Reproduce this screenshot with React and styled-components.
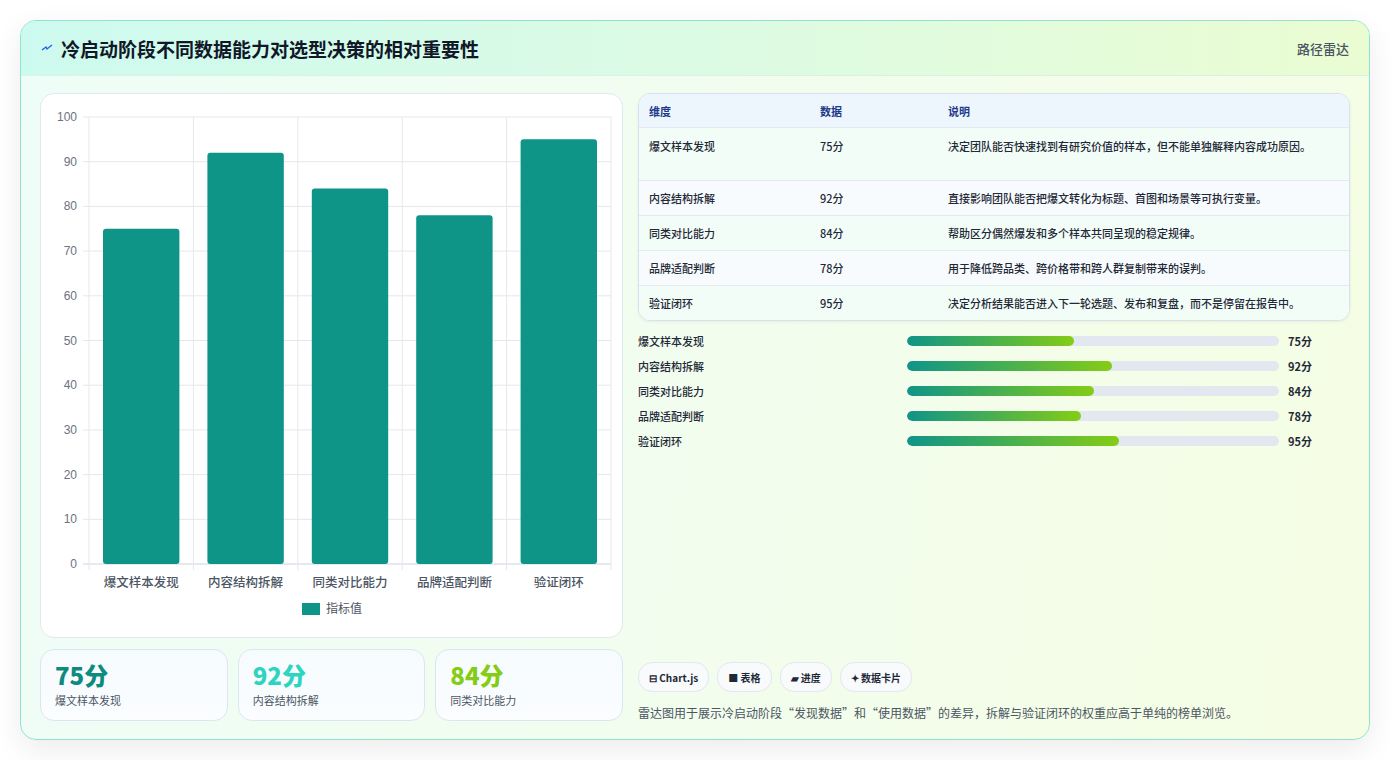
import React from 'react';
import styled, { createGlobalStyle } from 'styled-components';

const Global = createGlobalStyle`
  body { margin: 0; background: #ffffff; font-family: "Noto Sans CJK SC", "Noto Sans", sans-serif; }
`;

const data = [
  { name: '爆文样本发现', v: 75, note: '决定团队能否快速找到有研究价值的样本，但不能单独解释内容成功原因。' },
  { name: '内容结构拆解', v: 92, note: '直接影响团队能否把爆文转化为标题、首图和场景等可执行变量。' },
  { name: '同类对比能力', v: 84, note: '帮助区分偶然爆发和多个样本共同呈现的稳定规律。' },
  { name: '品牌适配判断', v: 78, note: '用于降低跨品类、跨价格带和跨人群复制带来的误判。' },
  { name: '验证闭环', v: 95, note: '决定分析结果能否进入下一轮选题、发布和复盘，而不是停留在报告中。' },
];

const Page = styled.div`
  padding: 20px;
  width: 1350px;
`;

const Shell = styled.div`
  height: 718px;
  border: 1px solid #8fe3cf;
  border-radius: 16px;
  overflow: hidden;
  background: linear-gradient(100deg, #effdf8 0%, #f2fdec 60%, #f5fde3 100%);
  box-shadow: 0 10px 30px rgba(0,0,0,0.08);
  display: flex;
  flex-direction: column;
`;

const Header = styled.div`
  height: 54px;
  flex: none;
  display: flex;
  align-items: center;
  justify-content: space-between;
  padding: 0 20px;
  background: linear-gradient(90deg, #cdfaef 0%, #dcfbe4 50%, #eafcd2 100%);
  border-bottom: 1px solid #d6f3e6;
`;

const Title = styled.h1`
  margin: 0;
  font-size: 19px;
  font-weight: 700;
  color: #111827;
  display: flex;
  align-items: center;
  gap: 8px;
`;

const Tag = styled.span`
  font-size: 13px;
  color: #4b5563;
  font-weight: 500;
`;

const Body = styled.div`
  flex: 1;
  display: grid;
  grid-template-columns: 583px 1fr;
  gap: 15px;
  padding: 17px 19px 19px 19px;
`;

const LeftCol = styled.div`
  display: flex;
  flex-direction: column;
  gap: 11px;
`;

const ChartCard = styled.div`
  height: 543px;
  background: #fff;
  border: 1px solid #e2e8f0;
  border-radius: 14px;
`;

const Stats = styled.div`
  display: grid;
  grid-template-columns: repeat(3, 1fr);
  gap: 10px;
`;

const Stat = styled.div`
  height: 72px;
  box-sizing: border-box;
  background: linear-gradient(180deg, #f6fbfe, #fbfdff);
  border: 1px solid #dbe7ef;
  border-radius: 14px;
  padding: 10px 14px;
`;

const StatValue = styled.div`
  font-size: 24px;
  font-weight: 800;
  line-height: 30px;
  color: ${p => p.c};
`;

const StatLabel = styled.div`
  font-size: 11px;
  color: #4b5563;
  margin-top: 2px;
`;

const RightCol = styled.div`
  display: flex;
  flex-direction: column;
`;

const Table = styled.div`
  border: 1px solid #d8e2ee;
  border-radius: 12px;
  overflow: hidden;
  box-shadow: 0 1px 3px rgba(0,0,0,0.06);
`;

const Row = styled.div`
  display: grid;
  grid-template-columns: 171px 128px 1fr;
  padding: 0 10px;
  min-height: ${p => p.h}px;
  align-items: ${p => (p.top ? 'start' : 'center')};
  padding-top: ${p => (p.top ? '9px' : '0')};
  box-sizing: border-box;
  font-size: 11px;
  color: ${p => (p.head ? '#1e3a8a' : '#1f2937')};
  font-weight: ${p => (p.head ? 700 : 500)};
  background: ${p => p.bg};
  border-top: ${p => (p.first ? 'none' : '1px solid #e3e9f0')};
  line-height: 18px;
`;

const Bars = styled.div`
  margin-top: 10px;
  display: flex;
  flex-direction: column;
  gap: 6px;
`;

const BarRow = styled.div`
  display: grid;
  grid-template-columns: 269px 372px 1fr;
  align-items: center;
  gap: 0;
  height: 19px;
  font-size: 11px;
  color: #1f2937;
  font-weight: 500;
`;

const Track = styled.div`
  height: 10px;
  border-radius: 5px;
  background: #e2e8f0;
  overflow: hidden;
`;

const Fill = styled.div`
  height: 100%;
  border-radius: 5px;
  background: linear-gradient(90deg, #0f9488, #84cc16);
`;

const BarValue = styled.span`
  padding-left: 9px;
  font-weight: 700;
`;

const Footer = styled.div`
  margin-top: auto;
`;

const Chips = styled.div`
  display: flex;
  gap: 8px;
`;

const Chip = styled.span`
  height: 28px;
  padding: 0 10px;
  display: inline-flex;
  align-items: center;
  border: 1px solid #e2e8f0;
  border-radius: 14px;
  background: #f8fafc;
  font-size: 10px;
  font-weight: 700;
  color: #1f2937;
`;

const Caption = styled.p`
  margin: 12px 0 0;
  font-size: 12px;
  color: #4b5563;
`;

const W = 582, H = 543, X0 = 48, X1 = 570, Y0 = 470, YT = 23;

function Chart() {
  const step = (X1 - X0) / 5;
  const yOf = v => Y0 - (v / 100) * (Y0 - YT);
  return (
    <svg width={W} height={H} style={{ display: 'block' }}>
      {[0, 10, 20, 30, 40, 50, 60, 70, 80, 90, 100].map(t => (
        <g key={t}>
          <line x1={X0 - 6} x2={X1} y1={yOf(t)} y2={yOf(t)} stroke={t === 0 ? '#cbd5e1' : '#e5e7eb'} />
          <text x={X0 - 12} y={yOf(t) + 4} textAnchor="end" fontSize="12" fill="#6b7280" fontFamily="Liberation Sans, sans-serif">{t}</text>
        </g>
      ))}
      {[0, 1, 2, 3, 4, 5].map(i => (
        <line key={i} x1={X0 + i * step} x2={X0 + i * step} y1={YT} y2={Y0 + 6} stroke="#e5e7eb" />
      ))}
      {data.map((d, i) => {
        const x = X0 + i * step + 14;
        return (
          <g key={d.name}>
            <rect x={x} y={yOf(d.v)} width={step - 28} height={Y0 - yOf(d.v)} rx="3" fill="#0f9488" />
            <text x={X0 + i * step + step / 2} y={Y0 + 23} textAnchor="middle" fontSize="12.5" fill="#4b5563" fontWeight="500">{d.name}</text>
          </g>
        );
      })}
      <rect x="261" y="509" width="18" height="12" fill="#0f9488" />
      <text x="285" y="519" fontSize="12" fill="#4b5563">指标值</text>
    </svg>
  );
}

export default function App() {
  const bgs = ['#f3fdf7', '#f7fbfd', '#f3fdf7', '#f7fbfd', '#f3fdf7'];
  return (
    <Page>
      <Global />
      <Shell>
        <Header>
          <Title>
            <svg width="12" height="10" viewBox="0 0 12 10"><path d="M1 7 L5 4 L6 6 L11 2" stroke="#2563eb" strokeWidth="1.4" fill="none" /></svg>
            冷启动阶段不同数据能力对选型决策的相对重要性
          </Title>
          <Tag>路径雷达</Tag>
        </Header>
        <Body>
          <LeftCol>
            <ChartCard><Chart /></ChartCard>
            <Stats>
              <Stat><StatValue c="#0f8a7e">75分</StatValue><StatLabel>爆文样本发现</StatLabel></Stat>
              <Stat><StatValue c="#2dd4bf">92分</StatValue><StatLabel>内容结构拆解</StatLabel></Stat>
              <Stat><StatValue c="#84cc16">84分</StatValue><StatLabel>同类对比能力</StatLabel></Stat>
            </Stats>
          </LeftCol>
          <RightCol>
            <Table>
              <Row head first h={33} bg="#eef6fd"><span>维度</span><span>数据</span><span>说明</span></Row>
              {data.map((d, i) => (
                <Row key={d.name} h={i === 0 ? 53 : 35} top={i === 0} bg={bgs[i]}>
                  <span>{d.name}</span><span>{d.v}分</span><span>{d.note}</span>
                </Row>
              ))}
            </Table>
            <Bars>
              {data.map(d => (
                <BarRow key={d.name}>
                  <span>{d.name}</span>
                  <Track><Fill style={{ width: `${d.v * 0.6}%` }} /></Track>
                  <BarValue>{d.v}分</BarValue>
                </BarRow>
              ))}
            </Bars>
            <Footer>
              <Chips>
                <Chip>⊟ Chart.js</Chip>
                <Chip>■ 表格</Chip>
                <Chip>▰ 进度</Chip>
                <Chip>✦ 数据卡片</Chip>
              </Chips>
              <Caption>雷达图用于展示冷启动阶段“发现数据”和“使用数据”的差异，拆解与验证闭环的权重应高于单纯的榜单浏览。</Caption>
            </Footer>
          </RightCol>
        </Body>
      </Shell>
    </Page>
  );
}
